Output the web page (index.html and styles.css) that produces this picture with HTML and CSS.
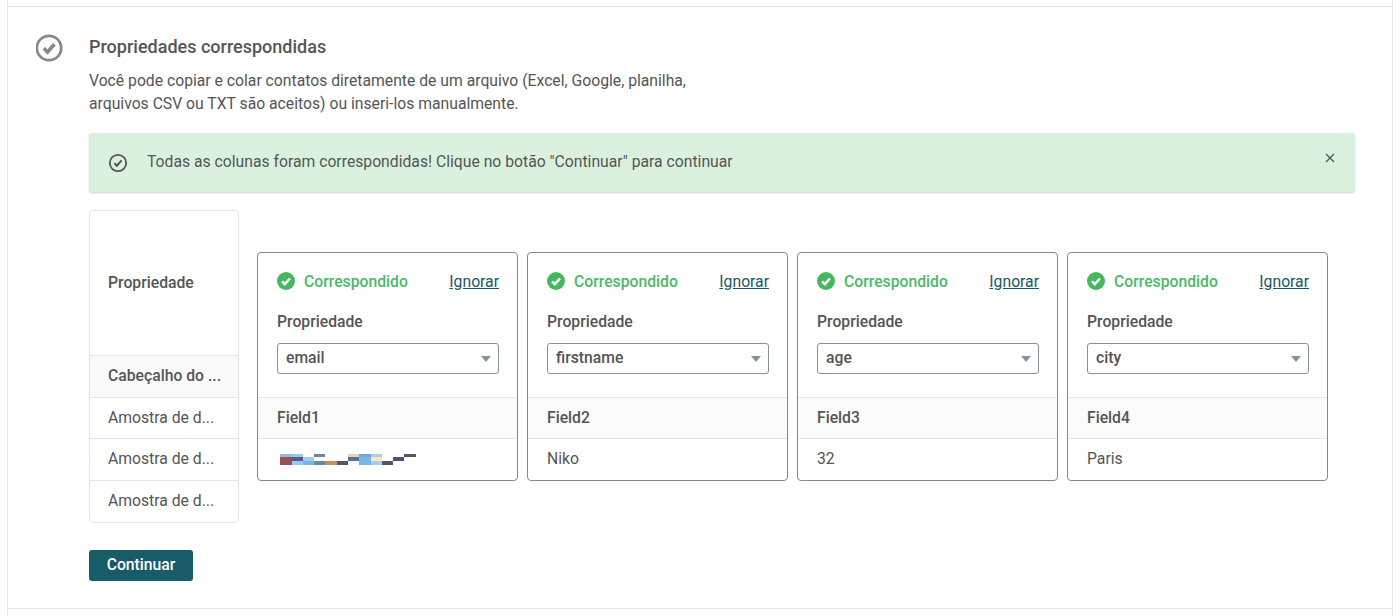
FILE: index.html
```html
<!DOCTYPE html>
<html lang="pt">
<head>
<meta charset="utf-8">
<title>Propriedades correspondidas</title>
<link rel="stylesheet" href="styles.css">
</head>
<body>
<div class="page">
  <section class="step">
    <svg class="step-icon" width="27" height="28" viewBox="0 0 27 28" fill="none" stroke="#888" aria-hidden="true">
      <circle cx="13" cy="14" r="12.2" stroke-width="2.8"/>
      <path d="M7.8 14.2l3.8 3.8 6.8-7.8" stroke-width="3.6"/>
    </svg>
    <div class="step-body">
      <h2 class="title">Propriedades correspondidas</h2>
      <p class="desc">Você pode copiar e colar contatos diretamente de um arquivo (Excel, Google, planilha,<br>arquivos CSV ou TXT são aceitos) ou inseri-los manualmente.</p>
      <div class="alert">
        <svg class="alert-icon" width="20" height="20" viewBox="0 0 20 20" fill="none" stroke="#555" aria-hidden="true">
          <circle cx="10" cy="10" r="8.2" stroke-width="1.8"/>
          <path d="M6.4 10.2l2.5 2.5 4.7-5.3" stroke-width="2"/>
        </svg>
        <span class="alert-text">Todas as colunas foram correspondidas! Clique no botão "Continuar" para continuar</span>
        <svg class="alert-close" width="10" height="10" viewBox="0 0 10 10" fill="none" stroke="#555" stroke-width="1.3" aria-hidden="true">
          <path d="M1 1l8 8M9 1l-8 8"/>
        </svg>
      </div>
      <div class="mapping">
        <div class="legend">
          <div class="legend-prop">Propriedade</div>
          <div class="legend-head">Cabeçalho do ...</div>
          <div class="legend-row">Amostra de d...</div>
          <div class="legend-row">Amostra de d...</div>
          <div class="legend-row">Amostra de d...</div>
        </div>
        <div class="cards">
          <div class="card">
            <div class="card-top">
              <div class="status-row">
                <svg class="ok" width="18" height="18" viewBox="0 0 18 18" aria-hidden="true"><circle cx="9" cy="9" r="9" fill="#46b760"/><path d="M5 9.3l2.8 2.8 5.2-5.6" fill="none" stroke="#fff" stroke-width="2.5"/></svg>
                <span class="status">Correspondido</span>
                <a class="ignore" href="#">Ignorar</a>
              </div>
              <div class="prop-label">Propriedade</div>
              <div class="select"><span>email</span><i class="caret"></i></div>
            </div>
            <div class="field">Field1</div>
            <div class="sample">
              <svg class="blur" width="136" height="11" viewBox="0 0 136 11" shape-rendering="crispEdges" role="img" aria-label="e-mail oculto">
                <rect x="0" y="0" width="12" height="3" fill="#90b8dc"/><rect x="12" y="0" width="11" height="3" fill="#98c8f0"/><rect x="34" y="0" width="11" height="3" fill="#6a87a8"/><rect x="68" y="0" width="11" height="3" fill="#f8cf9e"/><rect x="79" y="0" width="12" height="3" fill="#70acc8"/><rect x="91" y="0" width="11" height="3" fill="#a5d0ec"/><rect x="124" y="0" width="12" height="3" fill="#555a5e"/>
                <rect x="0" y="3" width="12" height="8" fill="#965050"/><rect x="12" y="3" width="11" height="4" fill="#555a8a"/><rect x="23" y="3" width="11" height="4" fill="#9ccdf8"/><rect x="68" y="3" width="11" height="4" fill="#4d74b0"/><rect x="79" y="3" width="12" height="8" fill="#78b4e6"/><rect x="91" y="3" width="11" height="4" fill="#fbe8b0"/><rect x="113" y="3" width="11" height="4" fill="#4f4f7a"/>
                <rect x="12" y="7" width="11" height="4" fill="#98c8f8"/><rect x="23" y="7" width="11" height="4" fill="#78b4e6"/><rect x="34" y="7" width="11" height="4" fill="#6a87a8"/><rect x="45" y="7" width="12" height="4" fill="#c49058"/><rect x="57" y="7" width="11" height="4" fill="#55585c"/><rect x="91" y="7" width="11" height="4" fill="#a5d0ec"/><rect x="102" y="7" width="11" height="4" fill="#5f4f68"/>
              </svg>
            </div>
          </div>
          <div class="card">
            <div class="card-top">
              <div class="status-row">
                <svg class="ok" width="18" height="18" viewBox="0 0 18 18" aria-hidden="true"><circle cx="9" cy="9" r="9" fill="#46b760"/><path d="M5 9.3l2.8 2.8 5.2-5.6" fill="none" stroke="#fff" stroke-width="2.5"/></svg>
                <span class="status">Correspondido</span>
                <a class="ignore" href="#">Ignorar</a>
              </div>
              <div class="prop-label">Propriedade</div>
              <div class="select"><span>firstname</span><i class="caret"></i></div>
            </div>
            <div class="field">Field2</div>
            <div class="sample">Niko</div>
          </div>
          <div class="card">
            <div class="card-top">
              <div class="status-row">
                <svg class="ok" width="18" height="18" viewBox="0 0 18 18" aria-hidden="true"><circle cx="9" cy="9" r="9" fill="#46b760"/><path d="M5 9.3l2.8 2.8 5.2-5.6" fill="none" stroke="#fff" stroke-width="2.5"/></svg>
                <span class="status">Correspondido</span>
                <a class="ignore" href="#">Ignorar</a>
              </div>
              <div class="prop-label">Propriedade</div>
              <div class="select"><span>age</span><i class="caret"></i></div>
            </div>
            <div class="field">Field3</div>
            <div class="sample">32</div>
          </div>
          <div class="card">
            <div class="card-top">
              <div class="status-row">
                <svg class="ok" width="18" height="18" viewBox="0 0 18 18" aria-hidden="true"><circle cx="9" cy="9" r="9" fill="#46b760"/><path d="M5 9.3l2.8 2.8 5.2-5.6" fill="none" stroke="#fff" stroke-width="2.5"/></svg>
                <span class="status">Correspondido</span>
                <a class="ignore" href="#">Ignorar</a>
              </div>
              <div class="prop-label">Propriedade</div>
              <div class="select"><span>city</span><i class="caret"></i></div>
            </div>
            <div class="field">Field4</div>
            <div class="sample">Paris</div>
          </div>
        </div>
      </div>
      <button class="continue" type="button">Continuar</button>
    </div>
  </section>
</div>
</body>
</html>
```
FILE: styles.css
```css
* { box-sizing: border-box; }
html, body { margin: 0; padding: 0; background: #fff; }
body {
  font-family: Roboto, "Liberation Sans", sans-serif;
  font-size: 15.72px;
  color: #555;
  overflow: hidden;
}
.page {
  width: 1386px;
  height: 616px;
  margin-left: 7px;
  padding-top: 6px;
  border-left: 1px solid #e5e5e5;
  border-right: 1px solid #e5e5e5;
}
.step {
  display: flex;
  height: 603px;
  padding: 27px 37px 0 28px;
  border-top: 1px solid #e5e5e5;
  border-bottom: 1px solid #e5e5e5;
}
.step-icon { flex: none; margin-right: 26px; }
.step-body { flex: 1; min-width: 0; }
.title {
  margin: 0;
  font-size: 18px;
  line-height: 26px;
  font-weight: 500;
}
.desc {
  margin: 9px 0 0;
  line-height: 23px;
}
.alert {
  display: flex;
  align-items: center;
  height: 59px;
  margin-top: 18px;
  padding: 0 20px 0 19px;
  background: #dbf1df;
  border-radius: 3px;
  box-shadow: 0 1px 2px rgba(0, 0, 0, .18);
}
.alert-icon { flex: none; margin-left: 0; margin-right: 20px; }
.alert-text { flex: 1; margin-left: -1px; margin-bottom: 3px; }
.alert-close { flex: none; margin-bottom: 10px; }
.mapping {
  display: flex;
  align-items: flex-start;
  margin-top: 18px;
}
.legend {
  flex: none;
  width: 150px;
  border: 1px solid #e5e5e5;
  border-radius: 4px;
}
.legend-prop {
  display: flex;
  align-items: center;
  height: 144px;
  padding: 0 0 2px 18px;
  font-weight: 500;
}
.legend-head {
  height: 42px;
  line-height: 39px;
  padding-left: 18px;
  font-weight: 500;
  background: #fafafa;
  border-top: 1px solid #e5e5e5;
}
.legend-row {
  height: 42px;
  line-height: 39px;
  padding-left: 18px;
  border-top: 1px solid #e5e5e5;
}
.legend-head + .legend-row { height: 41px; }
.cards {
  display: flex;
  gap: 9px;
  margin: 42px 0 0 18px;
}
.card {
  flex: none;
  width: 261px;
  height: 229px;
  border: 1px solid #888;
  border-radius: 4px;
}
.card-top {
  height: 144px;
  padding: 18px 18px 0 19px;
}
.status-row {
  display: flex;
  align-items: center;
  height: 20px;
}
.ok { flex: none; margin-right: 9px; }
.status { flex: 1; color: #4aba66; font-weight: 500; }
.ignore { color: #17596a; text-decoration: underline; }
.prop-label {
  margin-top: 21px;
  line-height: 20px;
  font-weight: 500;
}
.select {
  display: flex;
  align-items: center;
  justify-content: space-between;
  width: 222px;
  height: 31px;
  margin-top: 11px;
  padding: 0 7px 2px 8px;
  border: 1px solid #8492a0;
  border-radius: 3px;
  font-weight: 500;
}
.caret {
  width: 0;
  height: 0;
  margin-top: 2px;
  border-left: 5.5px solid transparent;
  border-right: 5.5px solid transparent;
  border-top: 6px solid #8492a0;
}
.field {
  height: 42px;
  line-height: 39px;
  padding-left: 19px;
  font-weight: 500;
  background: #fbfbfb;
  border-top: 1px solid #e5e5e5;
  border-bottom: 1px solid #e5e5e5;
}
.sample {
  height: 41px;
  line-height: 40px;
  padding-left: 19px;
}
.blur { display: block; margin: 15px 0 0 3px; }
.continue {
  display: block;
  width: 104px;
  height: 31px;
  margin-top: 27px;
  padding: 0 0 2px;
  border: 0;
  border-radius: 3px;
  background: #185b69;
  color: #fff;
  font: 500 15.72px Roboto, "Liberation Sans", sans-serif;
}
```
